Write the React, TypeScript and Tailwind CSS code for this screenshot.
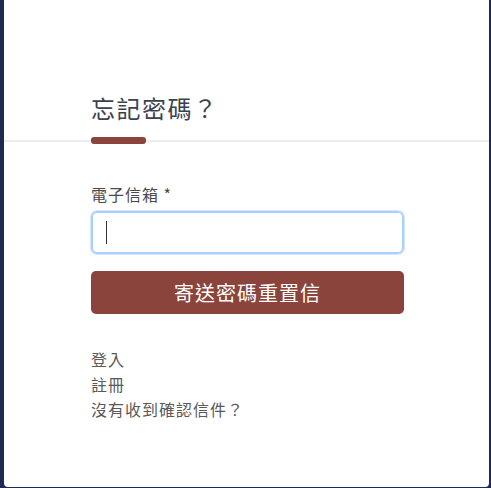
const font = "font-['Noto_Sans_CJK_TC','Noto_Sans',sans-serif]";

function ForgotLinks() {
  const links = ["登入", "註冊", "沒有收到確認信件？"];
  return (
    <div className="flex flex-col">
      {links.map((l) => (
        <a key={l} className="text-[16px] leading-[25px] tracking-[1px] text-[#5a5a5a] cursor-pointer">
          {l}
        </a>
      ))}
    </div>
  );
}

export default function App() {
  return (
    <div className={`min-h-[488px] bg-[#1f2a52] pl-[4px] pr-[2px] ${font}`}>
      <div className="h-[487px] bg-white rounded-b-[4px]">
        <div className="pt-[88px] pl-[87px]">
          <h1 className="text-[24px] leading-[40px] tracking-[1.5px] text-[#3c4350]">忘記密碼？</h1>
        </div>
        <div className="relative mt-[12px] h-[2px] bg-[#ececec]">
          <div className="absolute left-[87px] top-[-3px] h-[7px] w-[55px] rounded-[3px] bg-[#8b443c]" />
        </div>

        <div className="pl-[87px] pr-[85px] pt-[41px]">
          <label className="block text-[16px] leading-[22px] tracking-[1px] text-[#4a4a4a]">電子信箱 *</label>
          <div className="mt-[6px] h-[43px] rounded-[6px] border-2 border-[#a9d0fb] shadow-[0_0_0_1px_#d6e8fd] flex items-center pl-[13px]">
            <span className="block w-[1px] h-[23px] bg-[#333]" />
          </div>
          <button className="mt-[17px] w-full h-[43px] rounded-[5px] bg-[#8b443c] text-white text-[20px] tracking-[1px]">
            寄送密碼重置信
          </button>
          <div className="mt-[33px]">
            <ForgotLinks />
          </div>
        </div>
      </div>
    </div>
  );
}
